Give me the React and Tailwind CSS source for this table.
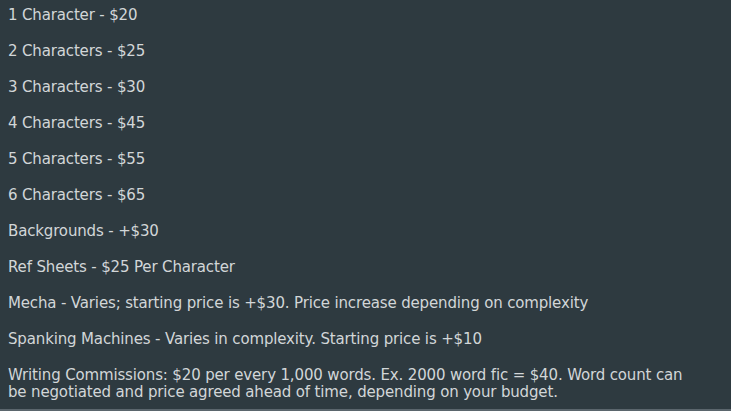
export default function App() {
  const items = [
    "1 Character - $20",
    "2 Characters - $25",
    "3 Characters - $30",
    "4 Characters - $45",
    "5 Characters - $55",
    "6 Characters - $65",
    "Backgrounds - +$30",
    "Ref Sheets - $25 Per Character",
    "Mecha - Varies; starting price is +$30. Price increase depending on complexity",
    "Spanking Machines - Varies in complexity. Starting price is +$10",
    "Writing Commissions: $20 per every 1,000 words. Ex. 2000 word fic = $40. Word count can be negotiated and price agreed ahead of time, depending on your budget.",
  ];
  return (
    <div className="w-[731px] h-[411px] bg-[#2e3a40] border-b-2 border-[#5b666d] overflow-hidden">
      <div className="pl-2 pr-[30px] pt-[7px] flex flex-col gap-[19px] text-[15px] leading-[17px] tracking-[-0.15px] text-[#d2d6d8] [font-family:'DejaVu_Sans',sans-serif]">
        {items.map((t) => (
          <p key={t}>{t}</p>
        ))}
      </div>
    </div>
  );
}
